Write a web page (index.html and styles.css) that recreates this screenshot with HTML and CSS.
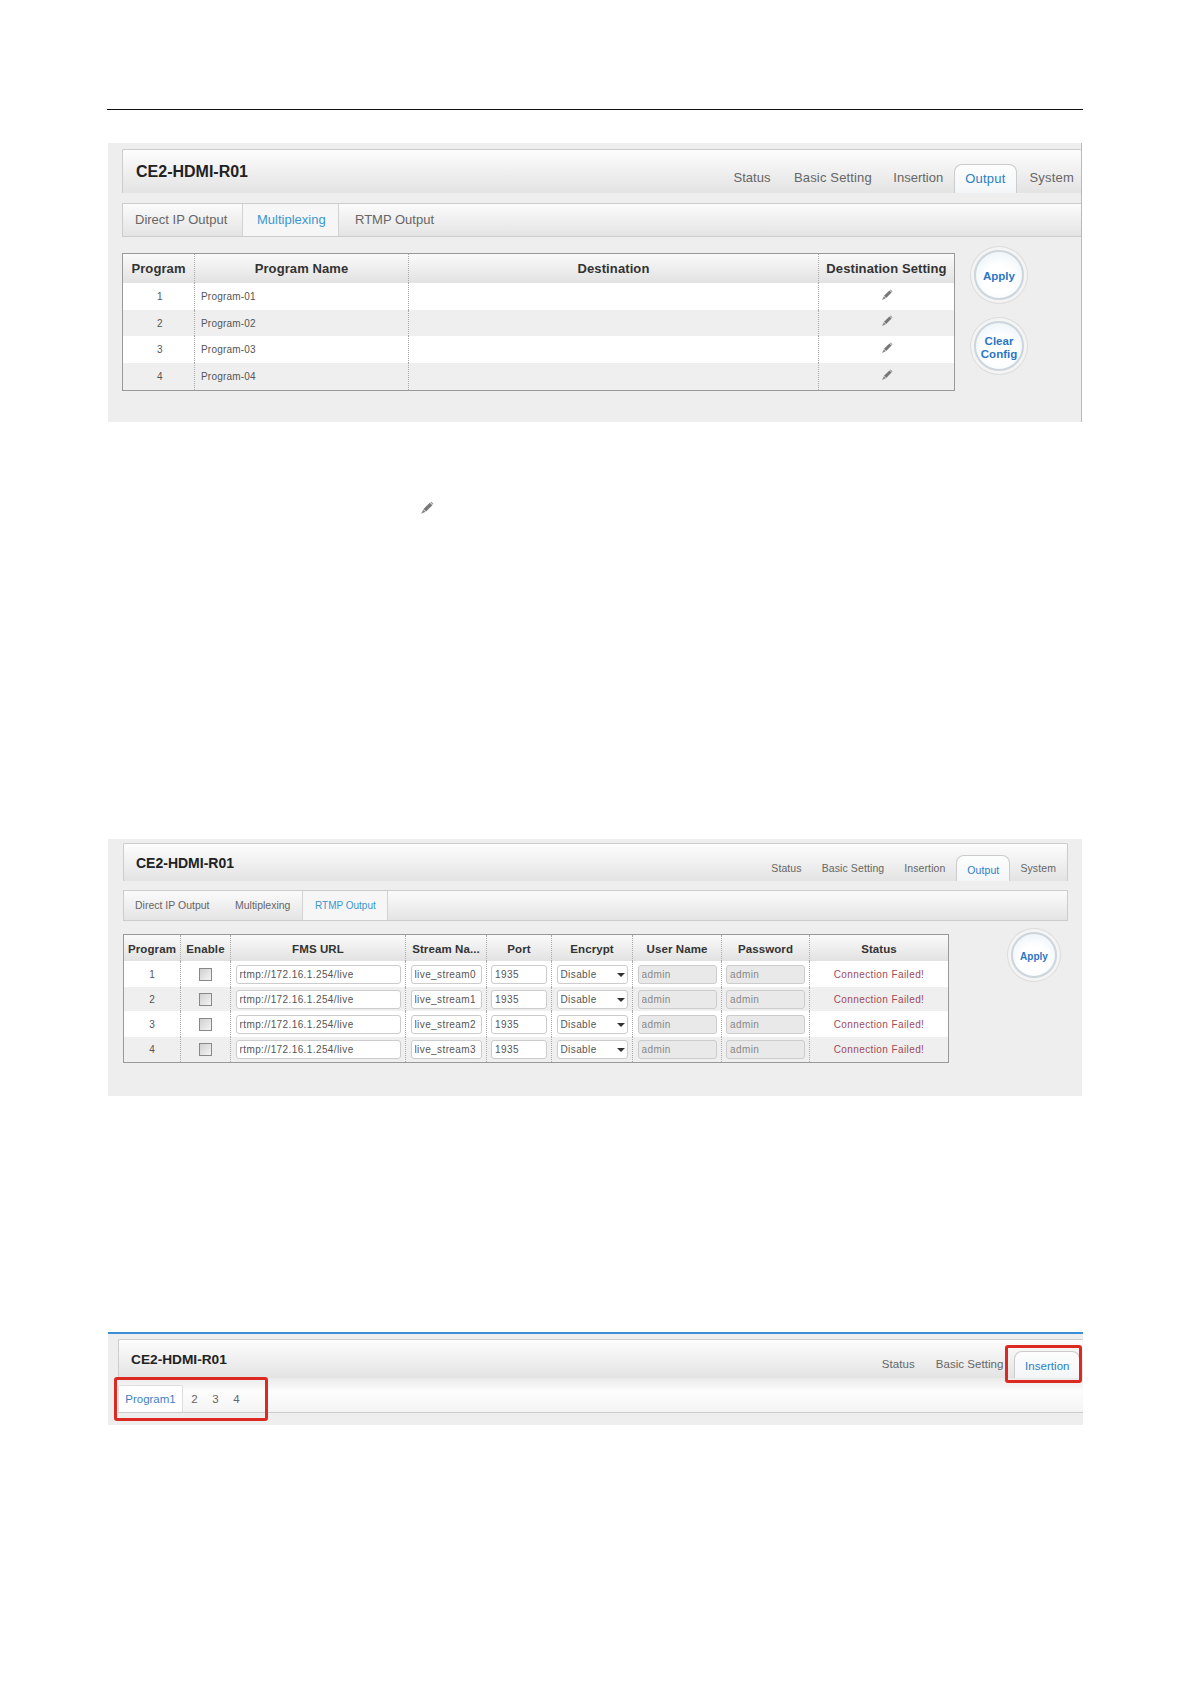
FILE: index.html
```html
<!DOCTYPE html>
<html lang="en">
<head>
<meta charset="utf-8">
<title>CE2-HDMI-R01</title>
<link rel="stylesheet" href="styles.css">
</head>
<body>
<svg class="defs" width="0" height="0" aria-hidden="true">
  <symbol id="pencil" viewBox="0 0 12 12">
    <path d="M3 6.8 8.4 1.4l2.2 2.2L5.2 9z" fill="#777"/>
    <path d="M8.8 1 9.8.6l1.6 1.6-.4 1z" fill="#999"/>
    <path d="M2.8 7.2 1 11l3.8-1.8z" fill="#888"/>
  </symbol>
</svg>
<div class="page">
  <hr class="rule">

  <section class="panel panel-a">
    <header class="head">
      <h1 class="title">CE2-HDMI-R01</h1>
      <nav class="nav">
        <a class="nav-item">Status</a>
        <a class="nav-item">Basic Setting</a>
        <a class="nav-item">Insertion</a>
        <a class="nav-item nav-active">Output</a>
        <a class="nav-item">System</a>
      </nav>
    </header>
    <div class="subnav">
      <a class="sub-item">Direct IP Output</a>
      <a class="sub-item sub-active">Multiplexing</a>
      <a class="sub-item">RTMP Output</a>
    </div>
    <div class="content">
      <table class="grid">
        <colgroup><col class="a1"><col class="a2"><col class="a3"><col class="a4"></colgroup>
        <thead><tr><th>Program</th><th>Program Name</th><th>Destination</th><th>Destination Setting</th></tr></thead>
        <tbody>
          <tr><td class="num">1</td><td class="name">Program-01</td><td></td><td class="edit"><svg class="pen"><use href="#pencil"/></svg></td></tr>
          <tr><td class="num">2</td><td class="name">Program-02</td><td></td><td class="edit"><svg class="pen"><use href="#pencil"/></svg></td></tr>
          <tr><td class="num">3</td><td class="name">Program-03</td><td></td><td class="edit"><svg class="pen"><use href="#pencil"/></svg></td></tr>
          <tr><td class="num">4</td><td class="name">Program-04</td><td></td><td class="edit"><svg class="pen"><use href="#pencil"/></svg></td></tr>
        </tbody>
      </table>
      <div class="actions">
        <button class="round">Apply</button>
        <button class="round">Clear<br>Config</button>
      </div>
    </div>
  </section>

  <div class="pen-line"><svg class="pen pen-big"><use href="#pencil"/></svg></div>

  <section class="panel panel-b">
    <header class="head">
      <h1 class="title">CE2-HDMI-R01</h1>
      <nav class="nav">
        <a class="nav-item">Status</a>
        <a class="nav-item">Basic Setting</a>
        <a class="nav-item nav-clip">Insertion</a>
        <a class="nav-item nav-active">Output</a>
        <a class="nav-item">System</a>
      </nav>
    </header>
    <div class="subnav">
      <a class="sub-item">Direct IP Output</a>
      <a class="sub-item">Multiplexing</a>
      <a class="sub-item sub-active">RTMP Output</a>
    </div>
    <div class="content">
      <table class="grid">
        <colgroup><col class="b1"><col class="b2"><col class="b3"><col class="b4"><col class="b5"><col class="b6"><col class="b7"><col class="b8"><col class="b9"></colgroup>
        <thead><tr><th>Program</th><th>Enable</th><th>FMS URL</th><th>Stream Na...</th><th>Port</th><th>Encrypt</th><th>User Name</th><th>Password</th><th>Status</th></tr></thead>
        <tbody>
          <tr><td class="num">1</td><td class="c"><input class="check" type="checkbox"></td><td class="c"><input class="field f-url" value="rtmp://172.16.1.254/live"></td><td class="c"><input class="field f-stream" value="live_stream0"></td><td class="c"><input class="field f-port" value="1935"></td><td class="c"><span class="sel"><select class="field f-sel"><option>Disable</option></select></span></td><td class="c"><input class="field f-off" value="admin" disabled></td><td class="c"><input class="field f-off" value="admin" disabled></td><td class="fail">Connection Failed!</td></tr>
          <tr><td class="num">2</td><td class="c"><input class="check" type="checkbox"></td><td class="c"><input class="field f-url" value="rtmp://172.16.1.254/live"></td><td class="c"><input class="field f-stream" value="live_stream1"></td><td class="c"><input class="field f-port" value="1935"></td><td class="c"><span class="sel"><select class="field f-sel"><option>Disable</option></select></span></td><td class="c"><input class="field f-off" value="admin" disabled></td><td class="c"><input class="field f-off" value="admin" disabled></td><td class="fail">Connection Failed!</td></tr>
          <tr><td class="num">3</td><td class="c"><input class="check" type="checkbox"></td><td class="c"><input class="field f-url" value="rtmp://172.16.1.254/live"></td><td class="c"><input class="field f-stream" value="live_stream2"></td><td class="c"><input class="field f-port" value="1935"></td><td class="c"><span class="sel"><select class="field f-sel"><option>Disable</option></select></span></td><td class="c"><input class="field f-off" value="admin" disabled></td><td class="c"><input class="field f-off" value="admin" disabled></td><td class="fail">Connection Failed!</td></tr>
          <tr><td class="num">4</td><td class="c"><input class="check" type="checkbox"></td><td class="c"><input class="field f-url" value="rtmp://172.16.1.254/live"></td><td class="c"><input class="field f-stream" value="live_stream3"></td><td class="c"><input class="field f-port" value="1935"></td><td class="c"><span class="sel"><select class="field f-sel"><option>Disable</option></select></span></td><td class="c"><input class="field f-off" value="admin" disabled></td><td class="c"><input class="field f-off" value="admin" disabled></td><td class="fail">Connection Failed!</td></tr>
        </tbody>
      </table>
      <div class="actions">
        <button class="round">Apply</button>
      </div>
    </div>
  </section>

  <section class="panel panel-c">
    <header class="head">
      <h1 class="title">CE2-HDMI-R01</h1>
      <nav class="nav">
        <a class="nav-item">Status</a>
        <a class="nav-item">Basic Setting</a>
        <a class="nav-item nav-active">Insertion</a>
      </nav>
    </header>
    <div class="subnav">
      <a class="sub-item sub-active">Program1</a>
      <a class="sub-item">2</a>
      <a class="sub-item">3</a>
      <a class="sub-item">4</a>
    </div>
    <div class="mark mark-left"></div>
    <div class="mark mark-right"></div>
  </section>
</div>
</body>
</html>
```
FILE: styles.css
```css
* { box-sizing: border-box; }
html, body { margin: 0; padding: 0; background: #fff; }
body { font-family: "Liberation Sans", Arial, sans-serif; color: #555; height: 1684px; overflow: hidden; }
.defs { position: absolute; }
.page { width: 975px; margin-left: 108px; padding-top: 109px; }
.rule { margin: 0 0 0 -1px; width: 976px; border: 0; height: 1px; background: #111; }

.panel { background: #eee; }
.head { display: flex; justify-content: space-between; align-items: flex-end; background: linear-gradient(#fdfdfd, #e3e3e3); border: 1px solid #ccc; border-bottom: 0; border-right: 0; border-radius: 2px 2px 0 0; }
.title { margin: 0; color: #222; font-weight: 700; align-self: center; }
.nav { display: flex; align-items: flex-end; }
.nav-item { display: block; color: #666; white-space: nowrap; }
.nav-active { color: #2b7fc4; background: linear-gradient(#fdfdfd, #f3f6f8); border: 1px solid #ccc; border-bottom: 0; border-radius: 8px 8px 0 0; }
.subnav { display: flex; background: linear-gradient(#fbfbfb, #e4e4e4); border: 1px solid #ccc; border-width: 1px 0 1px 1px; }
.sub-item { display: block; color: #666; white-space: nowrap; }
.sub-active { color: #3a97cf; background: #f6f6f6; border-left: 1px solid #d2d2d2; border-right: 1px solid #d2d2d2; }
.content { display: flex; align-items: flex-start; }

.grid { border-collapse: separate; border-spacing: 0; table-layout: fixed; border: 1px solid #999; background: #efefef; }
.grid th { background: linear-gradient(#fafafa, #e2e2e2); color: #333; font-weight: 700; text-align: center; padding: 0; white-space: nowrap; overflow: hidden; }
.grid th + th, .grid td + td { border-left: 1px dotted #aaa; }
.grid td { padding: 0; }
.grid tbody tr:nth-child(odd) { background: #fff; }
.num { text-align: center; }
.c { text-align: center; }

.actions { display: flex; flex-direction: column; }
.round { padding: 3px 0 0; border-radius: 50%; border: 2px solid #cdd6dc; background: radial-gradient(circle at 50% 60%, #fff 40%, #e6f0f6 100%); box-shadow: 0 0 0 3px #f4f4f4, 0 0 0 4px #dcdcdc; color: #2a76c6; font-family: "Liberation Sans", Arial, sans-serif; font-weight: 700; line-height: 13px; }

/* first panel */
.panel-a { margin-top: 33px; height: 279px; padding: 6px 0 0 14px; border-right: 1px solid #a6bcd8; width: 974px; }
.panel-a .head { height: 44px; padding: 0 0 0 13px; }
.panel-a .title { font-size: 16px; margin-top: 1px; }
.panel-a .nav-item { font-size: 13px; line-height: 28px; height: 29px; padding: 0 10.75px; }
.panel-a .nav-item:first-child { padding-right: 12.85px; }
.panel-a .nav-item:nth-child(2) { letter-spacing: .15px; }
.panel-a .nav-item:nth-child(3) { padding-right: 10.5px; }
.panel-a .nav-item:last-child { padding: 0 7px 0 11.5px; letter-spacing: .2px; }
.panel-a .nav-active { line-height: 28px; padding: 0 10.5px; margin: 0 1px 0 0; letter-spacing: .2px; }
.panel-a .subnav { margin-top: 10px; height: 34px; }
.panel-a .sub-item { font-size: 13px; line-height: 32px; padding: 0 15px 0 12px; }
.panel-a .sub-item:first-child { width: 119px; }
.panel-a .sub-active { width: 97px; padding: 0 14px; }
.panel-a .sub-active + .sub-item { padding-left: 16px; }
.panel-a .content { margin-top: 16px; }
.panel-a .grid { width: 833px; }
.a1 { width: 71px; } .a2 { width: 214px; } .a3 { width: 410px; } .a4 { width: 136px; }
.panel-a th { font-size: 13px; height: 29px; letter-spacing: .1px; }
.panel-a tbody tr { height: 27px; }
.panel-a tbody tr:nth-child(2) { height: 26px; }
.panel-a td { font-size: 10px; letter-spacing: .2px; }
.panel-a .num { padding-left: 3px; }
.name { padding-left: 6px !important; }
.edit { text-align: center; }
.pen { display: inline-block; width: 12px; height: 12px; vertical-align: middle; margin-top: -5px; }
.panel-a .actions { margin: -3px 0 0 19px; gap: 21px; }
.panel-a .round { width: 50px; height: 50px; font-size: 11.5px; }

.pen-line { height: 417px; padding: 79px 0 0 312px; }
.pen-big { width: 14px; height: 14px; margin: 0; display: block; }

/* second panel */
.panel-b { height: 257px; padding: 4px 0 0 15px; width: 974px; }
.panel-b .head { width: 945px; height: 38px; padding-left: 12px; border-right: 1px solid #ccc; }
.panel-b .title { font-size: 14px; margin-top: 1px; }
.panel-b .nav { padding-right: 1px; }
.panel-b .nav-item { font-size: 10.5px; letter-spacing: .1px; line-height: 27px; height: 26px; padding: 0 10px; }
.panel-b .nav-clip { width: 59px; overflow: hidden; margin-right: 3px; }
.panel-b .nav-active { line-height: 28px; }
.panel-b .subnav { width: 945px; margin-top: 9px; height: 31px; border-right: 1px solid #ccc; }
.panel-b .sub-item { font-size: 10.5px; line-height: 29px; padding: 0 12px 0 11px; }
.panel-b .sub-active { width: 86px; padding: 0 12px; font-size: 10px; }
.panel-b .sub-item:first-child { width: 100px; }
.panel-b .sub-item:nth-child(2) { width: 78px; }
.panel-b .content { margin-top: 13px; }
.panel-b .grid { width: 826px; }
.b1 { width: 56px; } .b2 { width: 50px; } .b3 { width: 175px; } .b4 { width: 81px; } .b5 { width: 65px; } .b6 { width: 81px; } .b7 { width: 89px; } .b8 { width: 88px; } .b9 { width: 139px; }
.panel-b th { font-size: 11.5px; height: 26px; letter-spacing: .1px; padding-top: 2px; }
.panel-b tbody tr { height: 26px; }
.panel-b tbody tr:nth-child(2) { height: 24px; }
.panel-b tbody tr:nth-child(4) { height: 25px; }
.panel-b td { font-size: 10px; }
.fail { color: #a04a58; text-align: center; letter-spacing: .4px; }
.field { display: inline-block; height: 19px; border: 1px solid #ccc; border-radius: 3px; background: #fff; color: #555; font: 10px "Liberation Sans", Arial, sans-serif; letter-spacing: .4px; padding: 0 3px; margin: 0; vertical-align: middle; }
.f-url { width: 165px; } .f-stream { width: 71px; } .f-port { width: 56px; }
.f-sel { width: 71px; appearance: none; -webkit-appearance: none; }
.f-off { width: 79px; background: #e9e9e9; color: #888; }
.sel { position: relative; display: inline-block; vertical-align: middle; }
.sel::after { content: ""; position: absolute; right: 3px; top: 8px; border: 4px solid transparent; border-top: 4px solid #333; border-bottom: 0; }
.check { appearance: none; -webkit-appearance: none; width: 13px; height: 13px; margin: 0; border: 1px solid #888; background: linear-gradient(135deg, #d0d0d0, #f4f4f4); vertical-align: middle; display: inline-block; }
.panel-b .actions { margin: -2px 0 0 62px; }
.panel-b .round { width: 46px; height: 46px; font-size: 10px; padding-top: 2px; }

/* third panel */
.panel-c { position: relative; margin-top: 236px; height: 93px; padding: 5px 0 0 10px; border-top: 2px solid #3a8fd6; }
.panel-c .head { height: 39px; padding-left: 12px; border-right: 0; }
.panel-c .title { font-size: 13.7px; margin-top: 1px; }
.panel-c .nav { padding-right: 3px; }
.panel-c .nav-item { font-size: 11.5px; letter-spacing: .05px; line-height: 26px; height: 27px; padding: 0 10.5px; }
.panel-c .nav-active { margin-left: 0; width: 66px; padding: 0 10px; line-height: 28px; border-bottom: 0; }
.panel-c .subnav { height: 35px; border: 0; border-bottom: 1px solid #ccc; background: linear-gradient(#eaeaea, #fdfdfd 40%, #f4f4f4); align-items: flex-end; }
.panel-c .sub-item { font-size: 11.5px; line-height: 26px; padding: 0 7px; width: 21px; text-align: center; }
.panel-c .sub-active { width: 65px; height: 27px; padding: 0; border: 1px solid #ddd; border-bottom: 0; background: #fff; color: #3f7fc4; border-radius: 2px 2px 0 0; }
.panel-c .sub-active + .sub-item { margin-left: 1px; }
.mark { position: absolute; border: 3px solid #dc2a22; border-radius: 3px; }
.mark-left { left: 6px; top: 43px; width: 154px; height: 44px; }
.mark-right { left: 897px; top: 11px; width: 77px; height: 38px; }
```
